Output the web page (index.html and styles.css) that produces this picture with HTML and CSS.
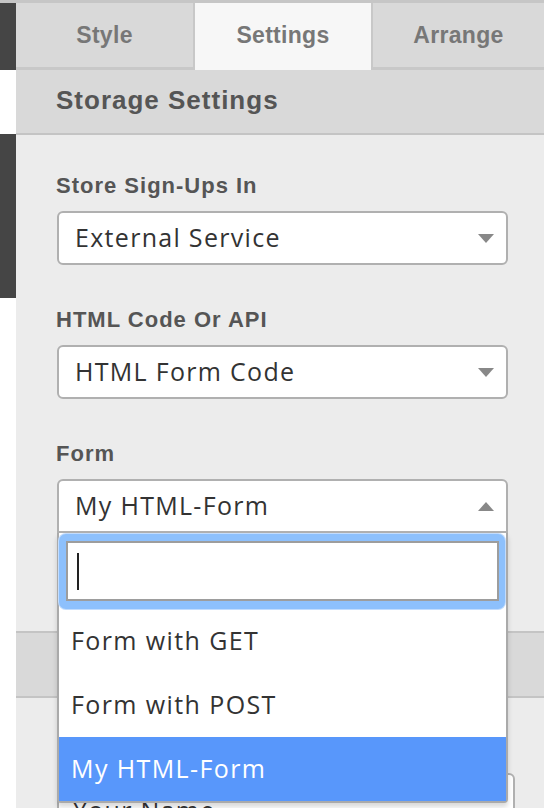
FILE: index.html
```html
<!DOCTYPE html>
<html>
<head>
<meta charset="utf-8">
<link rel="stylesheet" href="styles.css">
</head>
<body>
<div class="app">
  <div class="strip">
    <div class="strip-dark s1"></div>
    <div class="strip-light s2"></div>
    <div class="strip-dark s3"></div>
    <div class="strip-light s4"></div>
  </div>
  <div class="panel">
    <div class="tabs">
      <div class="tab">Style</div>
      <div class="tab active">Settings</div>
      <div class="tab last">Arrange</div>
    </div>
    <div class="section-head">Storage Settings</div>
    <div class="section-body">
      <div class="field">
        <div class="label">Store Sign-Ups In</div>
        <div class="select">
          <span class="value">External Service</span>
          <span class="arrow down"></span>
        </div>
      </div>
      <div class="field">
        <div class="label">HTML Code Or API</div>
        <div class="select">
          <span class="value">HTML Form Code</span>
          <span class="arrow down"></span>
        </div>
      </div>
      <div class="field last-field">
        <div class="label">Form</div>
        <div class="select open">
          <span class="value">My HTML-Form</span>
          <span class="arrow up"></span>
        </div>
        <div class="dropdown">
          <div class="search-wrap">
            <div class="search-ring">
              <div class="search-input"><span class="caret"></span></div>
            </div>
          </div>
          <ul class="options">
            <li class="option">Form with GET</li>
            <li class="option">Form with POST</li>
            <li class="option selected">My HTML-Form</li>
          </ul>
        </div>
      </div>
    </div>
    <div class="section-head collapsed"></div>
    <div class="section-body second">
      <div class="text-input">Your Name</div>
    </div>
  </div>
</div>
</body>
</html>
```
FILE: styles.css
```css
* { box-sizing: border-box; }
html, body { margin: 0; padding: 0; }
body {
  width: 544px;
  height: 808px;
  overflow: hidden;
  background: #ffffff;
  font-family: "Liberation Sans", Arial, sans-serif;
}
.app {
  display: flex;
  border-top: 3px solid #c6c6c6;
  height: 808px;
}
.strip {
  width: 16px;
  flex: none;
  display: flex;
  flex-direction: column;
}
.strip-dark { background: #454545; }
.strip-light { background: #ffffff; }
.s1 { height: 67px; }
.s2 { height: 64px; }
.s3 { height: 164px; }
.s4 { flex: 1; }

.panel {
  flex: 1;
  background: #ececec;
  display: flex;
  flex-direction: column;
}
.tabs {
  display: flex;
  height: 67px;
  flex: none;
}
.tab {
  background: #d9d9d9;
  color: #777777;
  font-weight: bold;
  font-size: 23px;
  letter-spacing: 0.3px;
  display: flex;
  align-items: center;
  justify-content: center;
  border-bottom: 3px solid #c8c8c8;
  border-right: 2px solid #c8c8c8;
  padding-top: 1px;
}
.tab:nth-child(1) { width: 179px; }
.tab:nth-child(2) { width: 178px; }
.tab.last { flex: 1; border-right: none; }
.tab.active {
  background: #f7f7f7;
  border-bottom: none;
  padding-bottom: 3px;
}
.section-head {
  height: 65px;
  flex: none;
  background: #d9d9d9;
  border-bottom: 2px solid #c4c4c4;
  color: #555555;
  font-weight: bold;
  font-size: 26px;
  letter-spacing: 1px;
  padding-left: 40px;
  display: flex;
  align-items: center;
  padding-bottom: 3px;
}
.section-head.collapsed {
  border-top: 2px solid #c4c4c4;
  height: 67px;
}
.section-body {
  padding: 40px 36px 98px 41px;
}
.field + .field { margin-top: 44px; }
.label {
  color: #555555;
  font-weight: bold;
  font-size: 22px;
  line-height: 22px;
  letter-spacing: 1px;
  margin-bottom: 14px;
  margin-left: -1px;
}
.last-field { position: relative; }
.select {
  height: 54px;
  background: #ffffff;
  border: 2px solid #b0b0b0;
  border-radius: 6px;
  display: flex;
  align-items: center;
  padding: 0 12px 0 16px;
  font-family: "Open Sans", "Noto Sans", sans-serif;
  font-size: 25px;
  letter-spacing: 1.3px;
  color: #333333;
}
.select.open {
  border-bottom-left-radius: 0;
  border-bottom-right-radius: 0;
}
.value { flex: 1; padding-bottom: 2px; }
.arrow {
  width: 0;
  height: 0;
  border-left: 8px solid transparent;
  border-right: 8px solid transparent;
}
.arrow.down { border-top: 9px solid #888888; }
.arrow.up { border-bottom: 9px solid #888888; }

.dropdown {
  position: absolute;
  left: 0;
  right: 0;
  top: 100%;
  background: #ffffff;
  border: 2px solid #aaaaaa;
  border-top: none;
  border-radius: 0 0 4px 4px;
  box-shadow: 0 4px 5px rgba(0, 0, 0, 0.15);
  z-index: 2;
}
.search-wrap {
  padding: 1px 1px 0 0;
}
.search-ring {
  padding: 7px 6px 8px 7px;
  background: #8dc0fc;
  border-radius: 7px;
  box-shadow: 0 0 0 1px #c2dcfd;
}
.search-input {
  height: 60px;
  background: #ffffff;
  border: 2px solid #9d9d9d;
  display: flex;
  align-items: center;
  padding-left: 9px;
}
.caret {
  width: 2px;
  height: 37px;
  background: #222222;
}
.options {
  list-style: none;
  margin: 0;
  padding: 0;
}
.option {
  height: 64px;
  display: flex;
  align-items: center;
  padding-left: 12px;
  padding-bottom: 2px;
  font-family: "Open Sans", "Noto Sans", sans-serif;
  font-size: 25px;
  letter-spacing: 1.4px;
  color: #333333;
}
.option.selected {
  background: #5897fb;
  color: #ffffff;
}
.section-body.second {
  padding: 75px 29px 0 41px;
}
.text-input {
  height: 60px;
  background: #ffffff;
  border: 2px solid #b0b0b0;
  border-radius: 6px;
  padding: 18px 0 0 14px;
  font-family: "Open Sans", "Noto Sans", sans-serif;
  font-size: 25px;
  letter-spacing: 1.3px;
  color: #333333;
}
```
